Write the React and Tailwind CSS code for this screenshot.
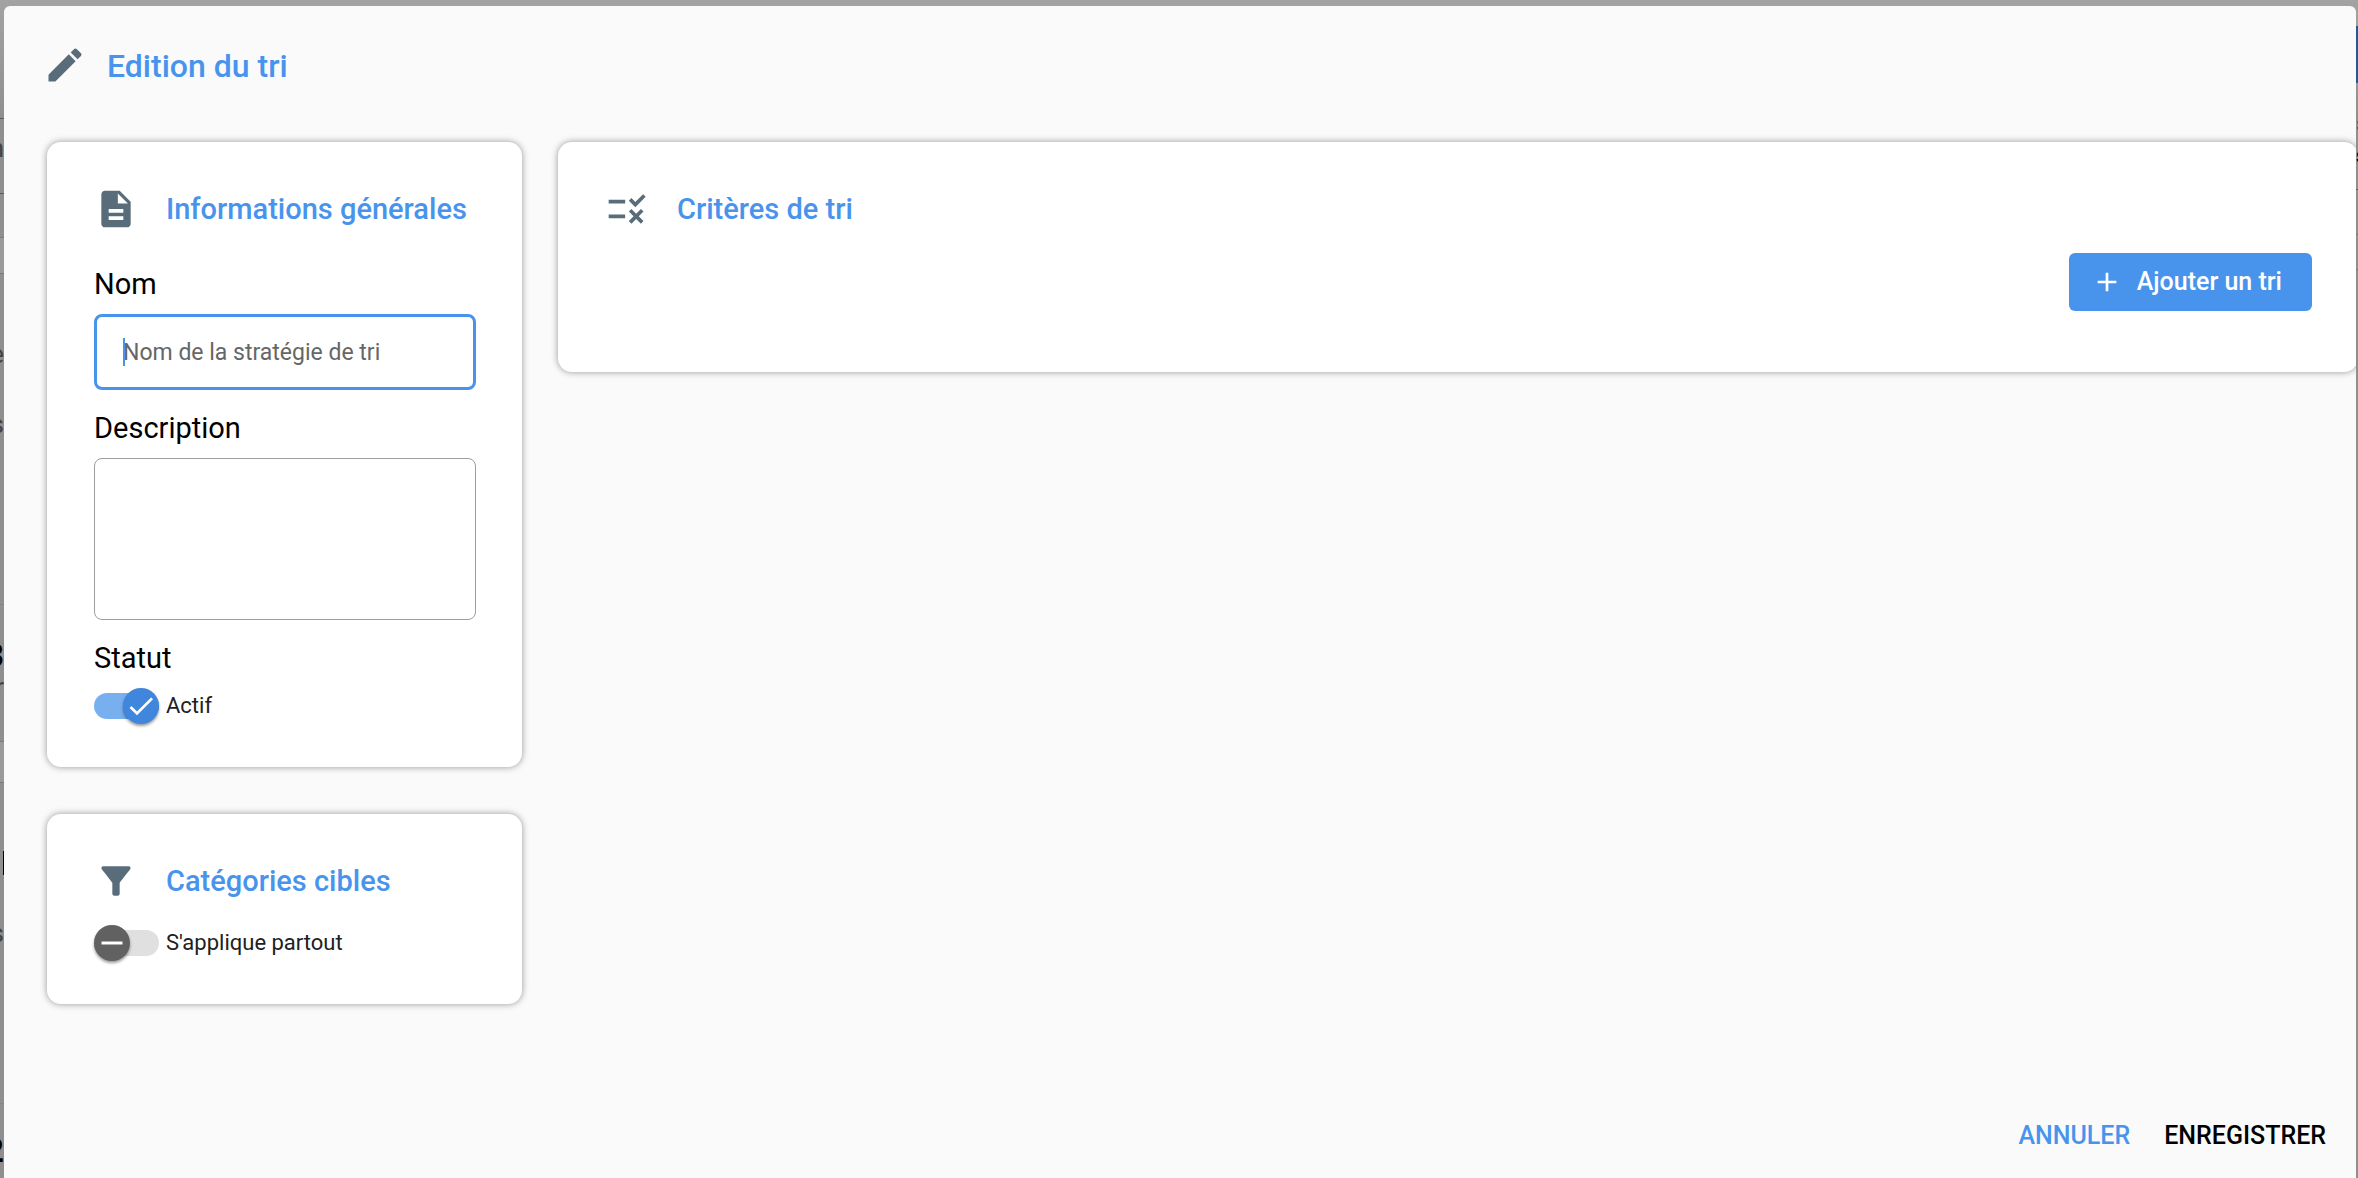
import { useState } from 'react';
import {
  MdAdd,
  MdCheck,
  MdDescription,
  MdEdit,
  MdFilterAlt,
  MdRemove,
  MdRule,
} from 'react-icons/md';

const Card = ({ icon: Icon, title, className = '', children }) => (
  <section
    className={`rounded-[14px] bg-white pt-[45px] pr-[46px] pb-[43px] pl-[47px] shadow-[0_0_7px_rgba(0,0,0,0.4)] ${className}`}
  >
    <div className="flex items-center gap-7">
      <Icon className="size-11 shrink-0 text-[#586c79]" />
      <h2 className="text-[29px] leading-9 font-medium whitespace-nowrap text-[#4894ed]">{title}</h2>
    </div>
    {children}
  </section>
);

const Switch = ({ id, label, checked, onChange }) => (
  <div className="flex items-center gap-[7px]">
    <div
      className={`relative flex h-[26px] w-[65px] items-center rounded-full my-[5px] ${
        checked ? 'justify-end bg-[#78b0ef]' : 'justify-start bg-[#e0e0e0]'
      }`}
    >
      <span
        className={`flex size-9 shrink-0 items-center justify-center rounded-full text-white shadow-[0_2px_3px_rgba(0,0,0,0.4)] ${
          checked ? 'bg-[#4186dd]' : 'bg-[#616161]'
        }`}
      >
        {checked ? <MdCheck className="size-8" /> : <MdRemove className="size-9" />}
      </span>
      <input
        id={id}
        type="checkbox"
        role="switch"
        checked={checked}
        onChange={(e) => onChange(e.target.checked)}
        className="absolute inset-0 size-full cursor-pointer opacity-0"
      />
    </div>
    <label htmlFor={id} className="text-[22px] leading-9 text-[#212121]">
      {label}
    </label>
  </div>
);

// Slices of the page that stay visible on both sides of the dialog
const PageLeft = () => (
  <div className="flex w-1 flex-col items-end overflow-hidden text-[26px] leading-8 text-[#444]" aria-hidden="true">
    <div className="h-[113px] w-full shrink-0 border-b border-[#5c5c5c]" />
    <div className="flex h-[75px] w-full shrink-0 items-center justify-end border-b border-[#5c5c5c] pb-4">n</div>
    <div className="h-11 w-full shrink-0 border-b border-[#7c7c7c]" />
    <div className="h-9 w-full shrink-0 border-b border-[#7c7c7c] bg-[#9a9a99]" />
    <div className="mt-[64px]">e</div>
    <div className="mt-[38px]">s</div>
    <div className="mt-[164px] w-full border-t border-[#858584]" />
    <div className="mt-[34px] text-[34px] font-bold text-black">3</div>
    <div>r</div>
    <div className="mt-[38px] h-[42px] w-full shrink-0 border-y border-[#7c7c7c] bg-[#9a9a99]" />
    <div className="mt-[68px] h-6 w-px shrink-0 bg-black" />
    <div className="mt-[42px]">s</div>
    <div className="mt-[154px] w-full border-t border-[#858584]" />
    <div className="mt-[30px] text-[34px] font-bold text-black">2</div>
  </div>
);

const PageRight = () => (
  <div className="flex w-[2px] flex-col overflow-hidden text-[22px] leading-8 text-[#444]" aria-hidden="true">
    <div className="mt-5 h-[57px] w-full shrink-0 bg-[#245893]" />
    <div className="mt-[25px]">s</div>
    <div className="font-bold text-black">s</div>
    <div className="mt-[17px] w-full border-t border-[#5c5c5c]" />
    <div className="mt-11 h-9 w-full shrink-0 border-y border-[#7c7c7c]" />
  </div>
);

const App = () => {
  const [name, setName] = useState('');
  const [description, setDescription] = useState('');
  const [active, setActive] = useState(true);
  const [everywhere, setEverywhere] = useState(false);

  return (
    <div className="flex min-h-screen bg-linear-to-b from-[#a3a3a3] to-[#908f8e] to-10% pt-[6px] font-[Roboto,sans-serif] text-black">
      <PageLeft />

      <main className="flex min-w-0 flex-1 flex-col overflow-hidden rounded-t-md bg-[#fafafa] pt-[37px] pl-[43px]">
        <header className="-ml-1 flex items-start gap-5">
          <MdEdit className="size-11 text-[#586c79]" />
          <h1 className="text-[32px] leading-[46px] font-medium text-[#4894ed]">Edition du tri</h1>
        </header>

        <div className="mt-[53px] flex items-start gap-9">
          <div className="flex w-[475px] shrink-0 flex-col gap-[47px]">
            <Card icon={MdDescription} title="Informations générales">
              <div className="mt-9 flex flex-col gap-[21px]">
                <div className="flex flex-col gap-[13px]">
                  <label htmlFor="name" className="text-[29px] leading-[34px]">
                    Nom
                  </label>
                  <div className="relative">
                    <input
                      id="name"
                      type="text"
                      value={name}
                      onChange={(e) => setName(e.target.value)}
                      placeholder="Nom de la stratégie de tri"
                      className="block h-[76px] w-full rounded-lg border-3 border-[#4894ed] bg-white px-[26px] text-[23px] outline-none placeholder:text-[#666]"
                    />
                    {!name && <span className="absolute top-6 left-[29px] h-7 w-[2px] bg-[#4894ed]" />}
                  </div>
                </div>

                <div className="flex flex-col gap-[13px]">
                  <label htmlFor="description" className="text-[29px] leading-[34px]">
                    Description
                  </label>
                  <textarea
                    id="description"
                    value={description}
                    onChange={(e) => setDescription(e.target.value)}
                    className="block h-[162px] w-full resize-none rounded-lg border border-[#9e9e9e] bg-white p-6 text-[23px] outline-none"
                  />
                </div>

                <div className="flex flex-col gap-[13px]">
                  <h3 className="text-[29px] leading-[34px]">Statut</h3>
                  <Switch id="active" label="Actif" checked={active} onChange={setActive} />
                </div>
              </div>
            </Card>

            <Card icon={MdFilterAlt} title="Catégories cibles">
              <div className="mt-[22px]">
                <Switch
                  id="everywhere"
                  label="S'applique partout"
                  checked={everywhere}
                  onChange={setEverywhere}
                />
              </div>
            </Card>
          </div>

          <Card icon={MdRule} title="Critères de tri" className="-mr-[2px] min-w-0 flex-1">
            <div className="mt-[22px] mb-[18px] flex justify-end">
              <button
                type="button"
                className="flex h-[58px] items-center gap-[14px] rounded-md bg-[#4894ed] pr-[30px] pl-[22px] text-[25px] font-medium text-white"
              >
                <MdAdd className="size-8" />
                Ajouter un tri
              </button>
            </div>
          </Card>
        </div>

        <footer className="mt-auto flex justify-end gap-[34px] pt-8 pr-[30px] pb-7 text-[25px] leading-7 font-medium">
          <button type="button" className="text-[#4894ed]">
            ANNULER
          </button>
          <button type="button">ENREGISTRER</button>
        </footer>
      </main>

      <PageRight />
    </div>
  );
};

export default App;
